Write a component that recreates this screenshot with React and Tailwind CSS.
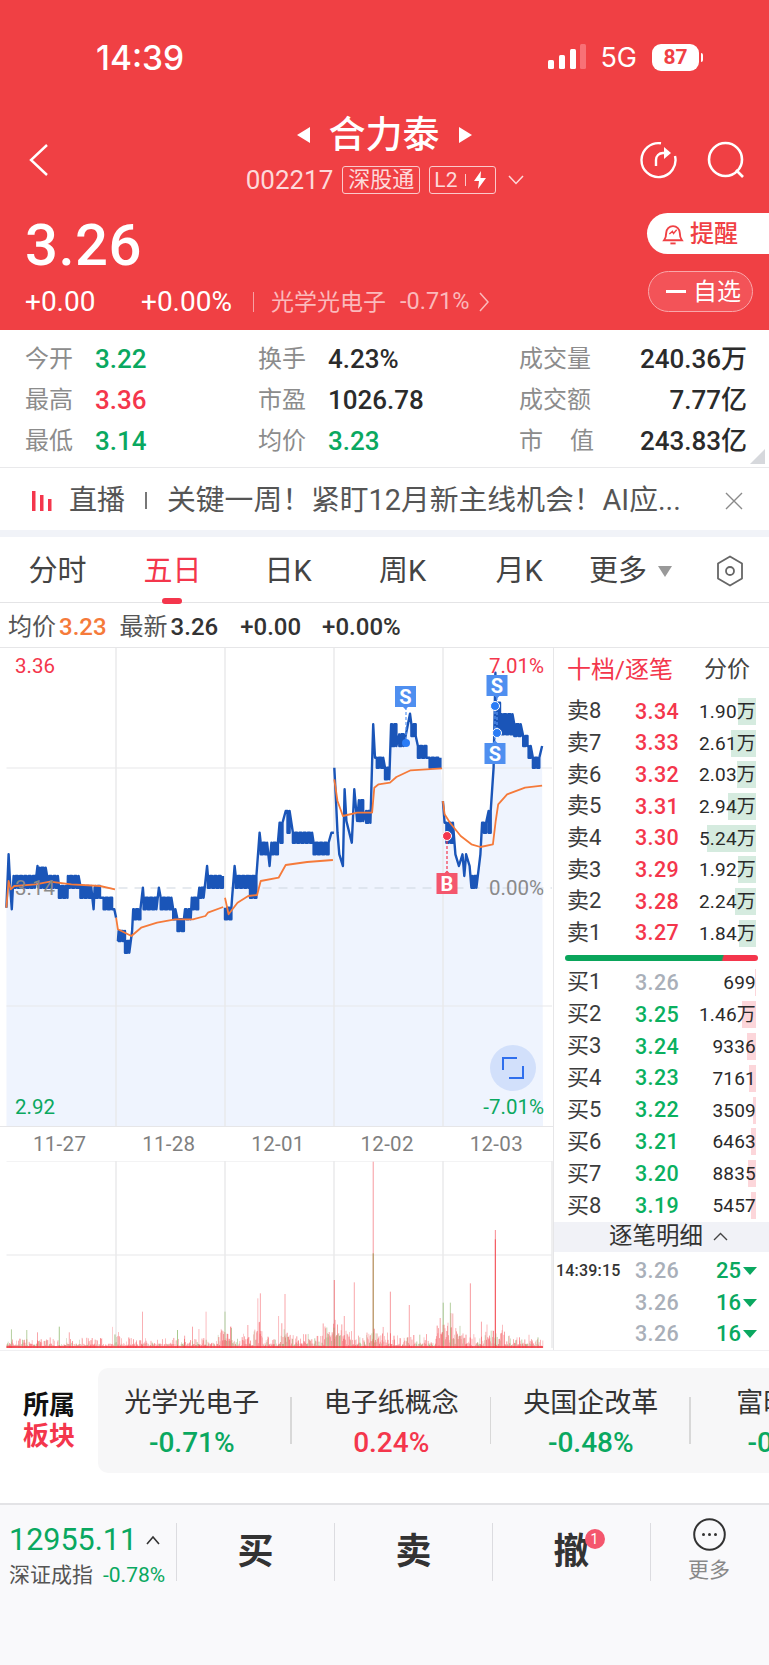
import React from 'react';

const RED = 'text-[#f4364c]';
const GREEN = 'text-[#0aa860]';

// Square wave between two price levels, the way a tick line looks when it bounces on the spread.
function band(x0, x1, a, b, step = 6) {
  const pts = [];
  let up = true;
  for (let x = x0; x <= x1; x += step) {
    pts.push([x, up ? a : b]);
    pts.push([x, up ? b : a]);
    up = !up;
  }
  return pts;
}

const tickDays = [
  [[18, 800], [24, 640], [30, 760], [33, 805], [36, 740], ...band(38, 100, 705, 740), [105, 675], [108, 740], ...band(110, 130, 680, 740), ...band(132, 165, 705, 740), ...band(165, 190, 735, 770), ...band(190, 225, 705, 740), ...band(225, 258, 735, 770), [262, 805], [265, 740], ...band(268, 285, 735, 770), ...band(290, 315, 770, 805), [320, 805], [325, 830]],
  [[330, 900], ...band(332, 350, 870, 900), ...band(350, 365, 900, 935), [370, 870], [373, 805], ...band(375, 398, 805, 835), [400, 740], ...band(402, 440, 770, 805), [445, 740], ...band(450, 480, 770, 805), ...band(485, 495, 805, 835), ...band(497, 518, 835, 870), [518, 805], ...band(522, 535, 805, 835), ...band(537, 555, 770, 805), ...band(558, 575, 740, 770), [580, 675], ...band(582, 628, 705, 740)],
  [...band(630, 648, 800, 835), [650, 770], [657, 675], ...band(660, 700, 705, 740), ...band(700, 722, 705, 770), [727, 575], ...band(730, 750, 605, 640), [755, 675], ...band(760, 778, 605, 640), [783, 545], ...band(785, 795, 545, 605), [800, 510], ...band(805, 815, 510, 575), ...band(820, 875, 575, 605), ...band(878, 925, 605, 640), [928, 575], [935, 575]],
  [[936, 380], [940, 460], [945, 575], [950, 640], [960, 675], [965, 445], [970, 540], [985, 605], [992, 445], [1000, 540], ...band(1005, 1020, 478, 540), ...band(1025, 1042, 510, 545), [1045, 250], [1050, 350], ...band(1055, 1075, 350, 380), ...band(1078, 1090, 380, 415), [1095, 250], ...band(1098, 1115, 250, 315), ...band(1118, 1130, 280, 315), [1148, 218], ...band(1152, 1165, 250, 285), ...band(1170, 1198, 315, 350), ...band(1203, 1238, 350, 380)],
  [[1240, 480], [1245, 545], ...band(1250, 1270, 545, 605), [1275, 640], [1285, 675], [1295, 640], [1300, 705], [1305, 640], [1315, 675], [1320, 740], ...band(1322, 1335, 705, 740), [1345, 640], [1350, 545], ...band(1355, 1365, 545, 575), ...band(1368, 1378, 510, 575), [1382, 380], [1387, 95], ...band(1388, 1400, 185, 280), ...band(1405, 1435, 220, 280), ...band(1440, 1460, 250, 285), ...band(1465, 1478, 285, 315), ...band(1480, 1490, 315, 350), ...band(1492, 1510, 350, 380), [1518, 315]],
];

const avgDays = [
  [[18, 800], [24, 720], [30, 745], [40, 735], [100, 730], [140, 722], [200, 730], [280, 735], [322, 745]],
  [[325, 830], [330, 865], [368, 885], [395, 860], [440, 845], [490, 835], [540, 835], [575, 825], [582, 815], [625, 798]],
  [[630, 770], [640, 820], [665, 785], [695, 765], [720, 762], [730, 720], [780, 710], [800, 672], [860, 663], [932, 657]],
  [[936, 415], [945, 480], [960, 525], [1000, 515], [1042, 515], [1048, 440], [1060, 430], [1092, 425], [1110, 408], [1150, 388], [1238, 382]],
  [[1240, 480], [1245, 520], [1260, 545], [1290, 585], [1320, 610], [1345, 618], [1380, 610], [1388, 540], [1395, 490], [1420, 460], [1470, 440], [1518, 434]],
];

// Raw series are stored at 2.8 units per px across and 3 units per px down, offset to y = 640.
const px = ([x, y]) => `${(x / 2.8).toFixed(1)},${(640 + y / 3).toFixed(1)}`;
const line = (pts) => pts.map(px).join(' ');

function PriceChart() {
  const all = tickDays.flat();
  const area = `6.5,1125 ${line(all)} 543,1125`;
  const vLines = [116, 225, 334, 443];
  return (
    <svg viewBox="0 647 553 479" className="absolute inset-0 w-[553px] h-[479px]">
      <polygon points={area} fill="#eff4fe" />
      <path d="M6.5 767H552M6.5 1005H552" stroke="#e8e8ea" strokeWidth="1.2" fill="none" />
      {vLines.map((x) => (
        <line key={x} x1={x} x2={x} y1="647" y2="1125" stroke="#e8e8ea" strokeWidth="1.4" />
      ))}
      <line x1="6.5" x2="552" y1="887" y2="887" stroke="#ced5df" strokeWidth="1.2" strokeDasharray="9 7" />
      {tickDays.map((d, i) => (
        <polyline key={i} points={line(d)} fill="none" stroke="#1a55b8" strokeWidth="2.4" strokeLinejoin="round" />
      ))}
      {avgDays.map((d, i) => (
        <polyline key={i} points={line(d)} fill="none" stroke="#f57a3a" strokeWidth="1.8" strokeLinejoin="round" />
      ))}
      <path d="M406 706V742M497 696V732M495 705V742" stroke="#5b96f2" strokeWidth="1.2" strokeDasharray="3 2" fill="none" />
      <path d="M447 835V872" stroke="#f4364c" strokeWidth="1.2" strokeDasharray="3 2" fill="none" />
      <circle cx="406" cy="742" r="4" fill="#2a7cf6" />
      <circle cx="495" cy="705" r="4.5" fill="#2a7cf6" stroke="#fff" strokeWidth="1" />
      <circle cx="497" cy="732" r="4.5" fill="#2a7cf6" stroke="#fff" strokeWidth="1" />
      <circle cx="447" cy="835" r="4.5" fill="#f4364c" stroke="#fff" strokeWidth="1" />
      <path d="M395 685h21v21h-8l-2.5 2.5-2.5-2.5h-8z" fill="#4f8ff0" />
      <path d="M486.5 674h21v21h-8l-2.5 2.5-2.5-2.5h-8z" fill="#4f8ff0" />
      <path d="M484.5 742h8l2.5-2.5 2.5 2.5h8v21h-21z" fill="#4f8ff0" />
      <path d="M436.5 872h8l2.5-2.5 2.5 2.5h8v21h-21z" fill="#f4566d" />
    </svg>
  );
}

function Badge({ children, className }) {
  return (
    <span className={`absolute w-[21px] h-[21px] flex items-center justify-center text-white text-[20px] font-bold leading-none ${className}`}>
      {children}
    </span>
  );
}

// Repeatable noise so the volume bars stay put from one render to the next.
function volumeBars() {
  const bars = [];
  let seed = 12345;
  const rnd = () => {
    seed = (seed * 1103515245 + 12345) & 0x7fffffff;
    return seed / 0x7fffffff;
  };
  const hot = [[336, 14], [375, 9], [445, 9], [452, 12], [495, 10], [225, 7], [258, 5], [285, 5], [116, 4]];
  for (let x = 7; x < 543; x += 0.6) {
    let h = 1.5 + rnd() * 3;
    if (rnd() > 0.62) h += rnd() * 7;
    for (const [c, w] of hot) {
      if (Math.abs(x - c) < w) h += rnd() * 14;
    }
    if (x > 225 && rnd() > 0.8) h += rnd() * 10;
    const green = rnd() > 0.78;
    bars.push({ x, h, color: green ? '#8aa85e' : '#f6474f', op: rnd() * 0.5 + 0.4 });
  }
  return bars;
}
const smallBars = volumeBars();

// Tall prints: position in 2.8-per-px units, top edge measured from y = 950 at 3 units per px.
const spikes = [
  [1045, 635, '#f79a9f'], [1045, 910, '#a89a58'], [1387, 840, '#f88a90'], [1387, 868, '#f4555c'], [936, 990, '#f27f84'], [992, 997, '#f9a6aa'],
  [1317, 1000, '#f79a9f'], [1093, 1025, '#f79a9f'], [1146, 1065, '#f9a6aa'], [722, 1045, '#fbbcc0'], [729, 1030, '#f9a6aa'],
  [798, 1032, '#f9a6aa'], [399, 1085, '#f9b0b4'], [577, 1085, '#fbbcc0'], [630, 1085, '#b5cf9f'], [780, 1098, '#fbbcc0'],
  [1241, 1058, '#a8c98e'], [1261, 1058, '#b5cf9f'], [1348, 1115, '#f9a6aa'], [166, 1130, '#a8c98e'], [32, 1138, '#b5cf9f'],
  [75, 1140, '#b5cf9f'], [194, 1147, '#f9a6aa'], [105, 1147, '#f9a6aa'], [497, 1140, '#a8c98e'], [539, 1130, '#f9a6aa'],
  [557, 1137, '#fbbcc0'], [517, 1157, '#f9a6aa'], [694, 1125, '#f9a6aa'], [646, 1130, '#fbbcc0'], [964, 1098, '#f9a6aa'],
];

function VolumeChart() {
  return (
    <svg viewBox="0 1161 553 189" className="w-[553px] h-[189px] block">
      <path d="M6.5 1161H552M6.5 1255H552" stroke="#e8e8ea" strokeWidth="1.2" fill="none" />
      {[116, 225, 334, 443, 552].map((x) => (
        <line key={x} x1={x} x2={x} y1="1161" y2="1348" stroke="#e8e8ea" strokeWidth="1.4" />
      ))}
      {spikes.map(([x, y, c], i) => (
        <line key={i} x1={x / 2.8} x2={x / 2.8} y1={950 + y / 3} y2="1348" stroke={c} strokeWidth="1" />
      ))}
      {smallBars.map((b, i) => (
        <line key={i} x1={b.x} x2={b.x} y1={1348 - b.h} y2="1348" stroke={b.color} strokeWidth="0.7" opacity={b.op} />
      ))}
      <line x1="6.5" x2="543" y1="1347" y2="1347" stroke="#f4333f" strokeWidth="1.6" />
    </svg>
  );
}

function StatCell({ label, value, valueClass, width }) {
  return (
    <div className={`flex items-center ${width}`}>
      <span className="w-[70px] text-[24px] text-[#8c8c8c] leading-none">{label}</span>
      <span className={`text-[26px] font-medium leading-none ${valueClass}`}>{value}</span>
    </div>
  );
}

function StatRow({ a, b, c }) {
  return (
    <div className="flex h-[41px] items-center pl-[25px] pr-[22px]">
      <StatCell {...a} width="w-[233px]" />
      <StatCell {...b} width="w-[261px]" />
      <div className="flex flex-1 items-center justify-between">
        <span className="w-[75px] flex justify-between text-[24px] text-[#8c8c8c] leading-none">
          {c.label.split(' ').map((part) => (
            <span key={part}>{part}</span>
          ))}
        </span>
        <span className="text-[26px] font-medium leading-none text-[#2b2b2b]">{c.value}</span>
      </div>
    </div>
  );
}

function DepthRow({ label, price, priceClass, qty, bar, barClass, rowClass }) {
  return (
    <div className={`relative flex items-center pl-[13px] pr-[13px] ${rowClass}`}>
      <span className="w-[68px] text-[22px] text-[#3c3c3c] leading-none">{label}</span>
      <span className={`w-[44px] text-[21.5px] font-medium leading-none tracking-[0.4px] ${priceClass}`}>{price}</span>
      <span className="relative flex-1 h-[27px] flex items-center justify-end">
        <span className={`absolute right-0 top-0 h-[27px] ${barClass}`} style={{ width: bar }} />
        <span className="relative text-[19px] text-[#2a2a2a] leading-none tracking-[0.2px]">{qty}</span>
      </span>
    </div>
  );
}

const sells = [
  ['卖8', '3.34', '1.90万', 18], ['卖7', '3.33', '2.61万', 25], ['卖6', '3.32', '2.03万', 19], ['卖5', '3.31', '2.94万', 28],
  ['卖4', '3.30', '5.24万', 49], ['卖3', '3.29', '1.92万', 18], ['卖2', '3.28', '2.24万', 21], ['卖1', '3.27', '1.84万', 17],
];
const buys = [
  ['买1', '3.26', '699', 1], ['买2', '3.25', '1.46万', 14], ['买3', '3.24', '9336', 9], ['买4', '3.23', '7161', 7],
  ['买5', '3.22', '3509', 3], ['买6', '3.21', '6463', 5], ['买7', '3.20', '8835', 8], ['买8', '3.19', '5457', 5],
];

function OrderBook() {
  return (
    <div className="w-[216px] border-l border-t border-[#e6e6e8] h-[703px] flex flex-col">
      <div className="flex h-[47px] items-center pl-[13px] pr-[19px] justify-between">
        <span className={`text-[24px] leading-none ${RED}`}>十档/逐笔</span>
        <span className="text-[23px] leading-none text-[#444]">分价</span>
      </div>
      <div className="mt-[4px]">
        {sells.map(([l, p, q, w]) => (
          <DepthRow key={l} label={l} price={p} priceClass={RED} qty={q} bar={w} barClass="bg-[#d5ebdf]" rowClass="h-[31.7px]" />
        ))}
      </div>
      <div className="mx-[11px] mt-[6px] h-[6px] w-[193px] rounded-full bg-[linear-gradient(105deg,#0aa55b_0,#0aa55b_81%,#f4364c_82%)]" />
      <div className="mt-[6px]">
        {buys.map(([l, p, q, w], i) => (
          <DepthRow key={l} label={l} price={p} priceClass={i === 0 ? 'text-[#a9afb9]' : 'text-[#0ab05f]'} qty={q} bar={w} barClass="bg-[#fcd6da]" rowClass="h-[31.9px]" />
        ))}
      </div>
      <div className="h-[33px] bg-[#f1f2f7] flex items-center justify-center gap-[10px] pl-[14px]">
        <span className="text-[23.5px] leading-none text-[#333]">逐笔明细</span>
        <svg width="15" height="9" viewBox="0 0 15 9" fill="none"><path d="M1 8l6.5-6.5L14 8" stroke="#444" strokeWidth="1.4" /></svg>
      </div>
      <div className="pt-[3px]">
        {[['14:39:15', '25'], ['', '16'], ['', '16']].map(([t, q], i) => (
          <div key={i} className="flex h-[31.6px] items-center pl-[2px] pr-[12px]">
            <span className="w-[79px] text-[16px] leading-none text-[#333] font-medium tracking-[0.2px]">{t}</span>
            <span className="w-[44px] text-[21.5px] font-medium leading-none tracking-[0.4px] text-[#a9afb9]">3.26</span>
            <span className={`flex-1 text-right text-[22px] font-medium leading-none ${GREEN}`}>{q}</span>
            <svg width="14" height="8" viewBox="0 0 14 8" className="ml-[2px]"><path d="M0 0h14L7 8z" fill="#0aa860" /></svg>
          </div>
        ))}
      </div>
    </div>
  );
}

function SectorItem({ name, pct, cls, last }) {
  return (
    <div className="w-[199.5px] shrink-0 flex flex-col items-center pt-[18px] gap-[6px] relative">
      <span className="text-[27px] leading-[34px] text-[#333] whitespace-nowrap">{name}</span>
      <span className={`text-[28px] leading-[34px] font-medium whitespace-nowrap ${cls}`}>{pct}</span>
      {!last && <span className="absolute right-0 top-[29px] h-[47px] w-[1.5px] bg-[#d8d8d8]" />}
    </div>
  );
}

function ActionCell({ text, badge }) {
  return (
    <div className="w-[158px] h-[58px] border-r border-[#dcdce0] flex items-center justify-center relative">
      <span className="relative text-[36px] font-bold leading-none text-[#333]">
        {text}
        {badge && (
          <span className="absolute right-[-15px] top-[-5px] w-[20px] h-[20px] rounded-full bg-[#f4566d] text-white text-[14px] font-normal flex items-center justify-center leading-none">1</span>
        )}
      </span>
    </div>
  );
}

export default function App() {
  return (
    <div className="w-[769px] h-[1665px] bg-white overflow-hidden font-[Roboto,'Noto_Sans_CJK_SC',sans-serif]">
      {/* Red quote header */}
      <header className="h-[330px] bg-[#f04044] text-white">
        <div className="h-[114px] flex items-center pl-[96px] pr-[66px]">
          <span className="mt-[3px] font-[Inter,sans-serif] text-[33.5px] font-medium leading-none">14:39</span>
          <div className="ml-auto flex items-center">
            <svg width="40" height="26" viewBox="0 0 40 26">
              <rect x="0" y="16" width="6" height="9" rx="1.5" fill="#fff" />
              <rect x="11" y="11" width="6" height="14" rx="1.5" fill="#fff" />
              <rect x="22" y="5" width="6" height="20" rx="1.5" fill="#fff" />
              <rect x="32" y="0" width="6" height="25" rx="1.5" fill="#f87176" />
            </svg>
            <span className="font-[Inter,sans-serif] text-[27px] leading-none ml-[12px] text-white">5G</span>
            <span className="ml-[15px] w-[47px] h-[27px] rounded-[9px] bg-white text-[#f04044] flex items-center justify-center text-[21px] font-bold leading-none">87</span>
            <span className="ml-[2px] w-[2px] h-[9px] rounded-r bg-white" />
          </div>
        </div>
        <div className="h-[92px] flex items-center pl-[29px] pr-[24px]">
          <svg width="19" height="32" viewBox="0 0 19 32" fill="none"><path d="M18 1L2 16l16 15" stroke="#fff" strokeWidth="2.4" /></svg>
          <div className="w-[500px] ml-[86px] self-start flex flex-col items-center">
            <div className="h-[42px] flex items-center">
              <svg width="13" height="16" viewBox="0 0 13 16"><path d="M13 0v16L0 8z" fill="#fff" /></svg>
              <span className="text-[37px] font-medium leading-none mx-[19px]">合力泰</span>
              <svg width="13" height="16" viewBox="0 0 13 16"><path d="M0 0v16l13-8z" fill="#fff" /></svg>
            </div>
            <div className="mt-[4px] h-[40px] flex items-center ml-[2px] text-[#fdd9da]">
              <span className="text-[26px] leading-none">002217</span>
              <span className="ml-[9px] w-[78px] h-[28px] border border-[#fbc9cb] rounded-[3px] flex items-center justify-center text-[22px] leading-none">深股通</span>
              <span className="ml-[9px] w-[67px] h-[28px] border border-[#fbc9cb] rounded-[3px] flex items-center pl-[4px] text-[21px] leading-none">
                L2
                <span className="mx-[8px] w-px h-[12px] bg-[#fbc9cb]" />
                <svg width="12" height="18" viewBox="0 0 12 18"><path d="M7 0L0 10h5l-1 8 8-11H6.500z" fill="#fff" /></svg>
              </span>
              <svg width="16" height="10" viewBox="0 0 16 10" fill="none" className="ml-[12px]"><path d="M1 1l7 7.500L15 1" stroke="#fdd9da" strokeWidth="1.5" /></svg>
            </div>
          </div>
          <div className="ml-auto flex items-center gap-[30px]">
            <svg width="38" height="38" viewBox="0 0 38 38" fill="none" stroke="#fff" strokeWidth="2.4">
              <path d="M22 2.300A17 17 0 1 0 36 15" />
              <path d="M17 25v-6c0-4 3-7 7-7h6" />
              <path d="M25 6l7 6-7 6z" fill="#fff" stroke="none" />
            </svg>
            <svg width="38" height="38" viewBox="0 0 38 38" fill="none" stroke="#fff" strokeWidth="2.6">
              <circle cx="18.500" cy="18.500" r="16.500" />
              <path d="M29 29l7 7" />
            </svg>
          </div>
        </div>
        <div className="h-[124px] flex justify-between">
          <div className="pl-[25px]">
            <div className="h-[78px] flex items-center text-[58px] font-medium leading-none tracking-[0.5px]">3.26</div>
            <div className="h-[36px] flex items-center">
              <span className="w-[116px] text-[28px] leading-none">+0.00</span>
              <span className="w-[112px] text-[28px] leading-none">+0.00%</span>
              <span className="w-px h-[20px] bg-[#f7a1a4]" />
              <span className="ml-[17px] text-[23px] leading-none text-[#fbb9bb]">光学光电子</span>
              <span className="ml-[14px] text-[23.5px] leading-none text-[#fbb9bb]">-0.71%</span>
              <svg width="11" height="20" viewBox="0 0 11 20" fill="none" className="ml-[9px]"><path d="M1 1l8 9-8 9" stroke="#fbb9bb" strokeWidth="1.5" /></svg>
            </div>
          </div>
          <div className="pt-[7px] flex flex-col items-end">
            <div className="w-[122px] h-[41px] bg-white rounded-l-full flex items-center pl-[15px] text-[#f04044]">
              <svg width="22" height="26" viewBox="0 0 21 24" fill="none" stroke="#f04044" strokeWidth="1.8">
                <path d="M2 18c1.500-2 2-3 2-7a6.500 6.500 0 0 1 13 0c0 4 .5 5 2 7z" />
                <path d="M7 12l3-2.500 1 2 3-3.500" strokeWidth="1.3" />
                <path d="M8 21h5" />
              </svg>
              <span className="ml-[6px] text-[24px] font-medium leading-none">提醒</span>
            </div>
            <div className="mt-[17px] mr-[16px] w-[105px] h-[41px] rounded-full bg-[#f35358] border border-[#f9a7aa] flex items-center pl-[17px]">
              <span className="w-[20px] h-[2.500px] bg-white" />
              <span className="ml-[7px] text-[24px] leading-none">自选</span>
            </div>
          </div>
        </div>
      </header>

      {/* Day statistics */}
      <section className="relative h-[138px] pt-[8px] border-b border-[#e9e9eb]">
        <StatRow
          a={{ label: '今开', value: '3.22', valueClass: GREEN }}
          b={{ label: '换手', value: '4.23%', valueClass: 'text-[#2b2b2b]' }}
          c={{ label: '成交量', value: '240.36万' }}
        />
        <StatRow
          a={{ label: '最高', value: '3.36', valueClass: RED }}
          b={{ label: '市盈', value: '1026.78', valueClass: 'text-[#2b2b2b]' }}
          c={{ label: '成交额', value: '7.77亿' }}
        />
        <StatRow
          a={{ label: '最低', value: '3.14', valueClass: GREEN }}
          b={{ label: '均价', value: '3.23', valueClass: GREEN }}
          c={{ label: '市 值', value: '243.83亿' }}
        />
        <span className="absolute right-[4px] bottom-[3px] w-0 h-0 border-l-[15px] border-l-transparent border-b-[15px] border-b-[#d6d8dc]" />
      </section>

      {/* Live stream banner */}
      <section className="h-[62px] flex items-center pl-[32px] pr-[26px] pt-[3px]">
        <svg width="20" height="20" viewBox="0 0 20 20" className="shrink-0"><path d="M0 0h3.500v20H0zM8 4h3.500v16H8zM16 8h3.500v12H16z" fill="#f4364c" /></svg>
        <span className="ml-[17px] text-[28px] leading-none text-[#555] whitespace-nowrap">直播</span>
        <span className="ml-[20px] w-[2px] h-[17px] bg-[#777]" />
        <span className="ml-[20px] w-[518px] text-[28.8px] leading-none text-[#555] whitespace-nowrap">关键一周！紧盯12月新主线机会！AI应...</span>
        <svg width="18" height="18" viewBox="0 0 18 18" fill="none" className="ml-auto"><path d="M1 1l16 16M17 1L1 17" stroke="#8a8a8a" strokeWidth="1.4" /></svg>
      </section>
      <div className="h-[7px] bg-[#f1f3f8]" />

      {/* Period tabs */}
      <nav className="h-[66px] border-b border-[#e4e4e6] flex items-center relative pt-[3px] text-[29px] leading-none text-[#444]">
        <span className="w-[115px] text-center">分时</span>
        <span className={`w-[115px] text-center relative ${RED}`}>
          五日
          <span className="absolute left-[47px] top-[41px] w-[20px] h-[6px] rounded-full bg-[#f4364c]" />
        </span>
        <span className="w-[116px] text-center">日K</span>
        <span className="w-[113px] text-center">周K</span>
        <span className="w-[120px] text-center">月K</span>
        <span className="ml-[10px]">更多</span>
        <svg width="14" height="11" viewBox="0 0 14 11" className="ml-[11px]"><path d="M0 0h14L7 11z" fill="#999" /></svg>
        <svg width="28" height="32" viewBox="0 0 28 32" fill="none" stroke="#666" strokeWidth="1.8" className="ml-[44px]">
          <path d="M14 1.500l12 7v15l-12 7-12-7v-15z" strokeLinejoin="round" />
          <circle cx="14" cy="16" r="4" />
        </svg>
      </nav>

      {/* Quote line above the chart */}
      <div className="h-[44px] flex items-center pl-[8px] pt-[3px] text-[24px] leading-none">
        <span className="text-[#555]">均价</span>
        <span className="ml-[3px] text-[#f57a3a] font-medium">3.23</span>
        <span className="ml-[13px] text-[#555]">最新</span>
        <span className="ml-[3px] text-[#333] font-medium">3.26</span>
        <span className="ml-[22px] text-[#333] font-medium">+0.00</span>
        <span className="ml-[21px] text-[#333] font-medium">+0.00%</span>
      </div>

      {/* Five-day chart and order book */}
      <div className="flex h-[703px]">
        <div className="w-[553px] shrink-0">
          <div className="relative w-[553px] h-[479px] border-t border-[#e6e6e8]">
            <PriceChart />
            <span className="absolute left-[15px] top-[8px] text-[20.5px] leading-none text-[#f4364c]">3.36</span>
            <span className="absolute right-[9px] top-[8px] text-[20.5px] leading-none text-[#f4364c]">7.01%</span>
            <span className="absolute left-[15px] top-[230px] text-[20.5px] leading-none text-[#8a8a8a]">3.14</span>
            <span className="absolute right-[9px] top-[230px] text-[20.5px] leading-none text-[#8a8a8a]">0.00%</span>
            <span className="absolute left-[15px] top-[449px] text-[20.5px] leading-none text-[#0aa860]">2.92</span>
            <span className="absolute right-[9px] top-[449px] text-[20.5px] leading-none text-[#0aa860]">-7.01%</span>
            <Badge className="left-[395px] top-[38px]">S</Badge>
            <Badge className="left-[486.5px] top-[27px]">S</Badge>
            <Badge className="left-[484.5px] top-[95px]">S</Badge>
            <Badge className="left-[436.5px] top-[225px]">B</Badge>
            <span className="absolute left-[490px] top-[397px] w-[46px] h-[46px] rounded-full bg-[#d2e0fb] flex items-center justify-center">
              <svg width="22" height="22" viewBox="0 0 22 22" fill="none" stroke="#2f6fed" strokeWidth="2">
                <path d="M1 13V1h14M21 9v12H7" />
              </svg>
            </span>
          </div>
          <div className="h-[35px] flex items-center pl-[5px] border-t border-[#e6e6e8] text-[20.5px] leading-none text-[#7f7f7f]">
            {['11-27', '11-28', '12-01', '12-02', '12-03'].map((d) => (
              <span key={d} className="w-[109.2px] text-center tracking-[0.3px]">{d}</span>
            ))}
          </div>
          <VolumeChart />
        </div>
        <OrderBook />
      </div>

      {/* Related sectors */}
      <section className="h-[153px] border-t border-[#f0f0f2] flex items-start pt-[17px]">
        <div className="w-[98px] pl-[23px] pt-[22px] text-[26px] font-bold leading-[31px]">
          <div className="text-[#111]">所属</div>
          <div className={RED}>板块</div>
        </div>
        <div className="flex-1 h-[105px] bg-[#f7f7f8] rounded-l-[10px] flex overflow-hidden">
          <div className="flex ml-[-6px]">
            <SectorItem name="光学光电子" pct="-0.71%" cls={GREEN} />
            <SectorItem name="电子纸概念" pct="0.24%" cls={RED} />
            <SectorItem name="央国企改革" pct="-0.48%" cls={GREEN} />
            <SectorItem name="富时罗素" pct="-0.35%" cls={GREEN} last />
          </div>
        </div>
      </section>

      {/* Bottom trade bar */}
      <footer className="h-[162px] bg-[#f9f9fb] border-t-2 border-[#e3e3e6] flex items-start pt-[18px]">
        <div className="w-[177px] h-[58px] border-r border-[#dcdce0] pl-[9px] shrink-0">
          <div className="flex items-center h-[36px] mt-[-1px]">
            <span className={`text-[30.5px] leading-none ${GREEN}`}>12955.11</span>
            <svg width="14" height="10" viewBox="0 0 14 10" fill="none" className="ml-[9px]"><path d="M1 9l6-7 6 7" stroke="#333" strokeWidth="1.6" /></svg>
          </div>
          <div className="flex items-center h-[34px]">
            <span className="text-[21px] leading-none text-[#555]">深证成指</span>
            <span className={`ml-[10px] text-[21px] leading-none ${GREEN}`}>-0.78%</span>
          </div>
        </div>
        <ActionCell text="买" />
        <ActionCell text="卖" />
        <ActionCell text="撤" badge />
        <div className="flex-1 flex flex-col items-center mt-[-5px] pr-[2px]">
          <svg width="33" height="33" viewBox="0 0 33 33" fill="none">
            <circle cx="16.500" cy="16.500" r="15.300" stroke="#333" strokeWidth="2" />
            <circle cx="10.500" cy="16.500" r="1.500" fill="#333" />
            <circle cx="16.500" cy="16.500" r="1.500" fill="#333" />
            <circle cx="22.500" cy="16.500" r="1.500" fill="#333" />
          </svg>
          <span className="mt-[9px] text-[21px] leading-none text-[#888]">更多</span>
        </div>
      </footer>
    </div>
  );
}
